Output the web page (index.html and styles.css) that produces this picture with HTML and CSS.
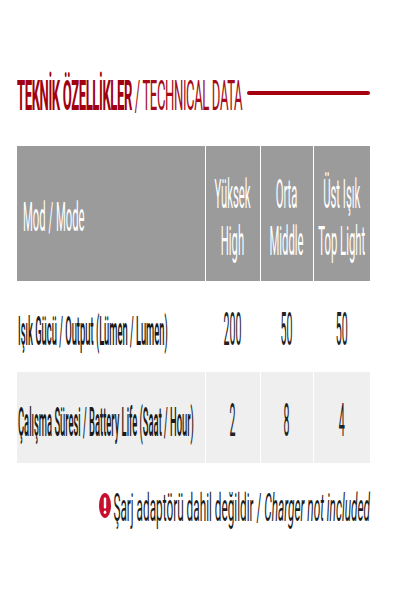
FILE: index.html
```html
<!DOCTYPE html>
<html lang="tr">
<head>
<meta charset="utf-8">
<title>Teknik Özellikler / Technical Data</title>
<link rel="stylesheet" href="styles.css">
</head>
<body>
<div class="page">
  <header class="title-row">
    <h1 class="title"><span class="stretch title-text"><b class="title-strong">TEKNİK ÖZELLİKLER</b> / TECHNICAL DATA</span></h1>
    <span class="rule"></span>
  </header>

  <table class="spec">
    <colgroup>
      <col class="c-label">
      <col class="c-high">
      <col class="c-mid">
      <col class="c-top">
    </colgroup>
    <thead>
      <tr>
        <th class="th-label"><div class="stretch-head">Mod / Mode</div></th>
        <th><div class="stretch-head">Yüksek<br>High</div></th>
        <th><div class="stretch-head">Orta<br>Middle</div></th>
        <th><div class="stretch-head">Üst Işık<br>Top Light</div></th>
      </tr>
    </thead>
    <tbody>
      <tr class="row-white">
        <td class="td-label"><div class="stretch-row">Işık Gücü / Output (Lümen / Lumen)</div></td>
        <td><div class="stretch-row num">200</div></td>
        <td><div class="stretch-row num">50</div></td>
        <td><div class="stretch-row num">50</div></td>
      </tr>
      <tr class="row-grey">
        <td class="td-label"><div class="stretch-row">Çalışma Süresi / Battery Life (Saat / Hour)</div></td>
        <td><div class="stretch-row num">2</div></td>
        <td><div class="stretch-row num">8</div></td>
        <td><div class="stretch-row num">4</div></td>
      </tr>
    </tbody>
  </table>

  <p class="note">
    <svg class="warn" width="12" height="25" viewBox="0 0 12 25" aria-hidden="true">
      <ellipse cx="6" cy="12.5" rx="6" ry="12.5" fill="#c8102e"/>
      <rect x="4.8" y="4.5" width="2.4" height="11" rx="1.1" fill="#ffffff"/>
      <ellipse cx="6" cy="19.2" rx="1.3" ry="1.8" fill="#ffffff"/>
    </svg>
    <span class="stretch-note">Şarj adaptörü dahil değildir / <i>Charger not included</i></span>
  </p>
</div>
</body>
</html>
```

FILE: styles.css
```css
html, body {
  margin: 0;
  padding: 0;
  background: #ffffff;
}

body {
  font-family: Roboto, "Liberation Sans", Arial, sans-serif;
  color: #1c1c1c;
}

.page {
  width: 401px;
  height: 601px;
  padding: 77px 31px 0 17px;
  box-sizing: border-box;
}

/* ---------- title ---------- */
.title-row {
  display: flex;
  align-items: center;
  gap: 5px;
  height: 40px;
}

.title {
  margin: 0;
  font-size: 13.1px;
  font-weight: 400;
  letter-spacing: -0.4px;
  line-height: 14px;
  color: #a50a18;
  white-space: nowrap;
}

.title-strong {
  font-weight: 700;
  color: #a0000f;
}

.stretch {
  display: inline-block;
  transform: scaleY(3.3);
}

.rule {
  flex: 1;
  height: 4px;
  margin-bottom: 8px;
  background: #a4000f;
  border-radius: 2px;
}

/* ---------- table ---------- */
.spec {
  margin-top: 29px;
  border-collapse: collapse;
  table-layout: fixed;
  width: 353px;
}

.c-label { width: 188px; }
.c-high  { width: 55px; }
.c-mid   { width: 53px; }
.c-top   { width: 57px; }

.spec th,
.spec td {
  padding: 10px 0 0;
  border-left: 1px solid #ffffff;
  text-align: center;
  vertical-align: middle;
}

.spec th:first-child,
.spec td:first-child {
  border-left: none;
}

.spec thead th {
  height: 125px;
  background: #9b9b9b;
  color: #ffffff;
  font-weight: 400;
  font-size: 11.3px;
}

.th-label,
.td-label {
  text-align: left !important;
  padding-left: 6px !important;
}

.td-label {
  padding-left: 1px !important;
}

.stretch-head {
  line-height: 13px;
  transform: scaleY(3.6);
}

.row-white td {
  height: 81px;
  background: #ffffff;
}

.row-grey td {
  height: 81px;
  background: #efefef;
}

.spec td {
  font-size: 9.4px;
  font-weight: 500;
  color: #1a1a1a;
  white-space: nowrap;
}

.stretch-row {
  line-height: 12px;
  transform: scaleY(4.4);
}

.num {
  font-size: 10.7px;
  font-weight: 400;
  color: #222222;
}

/* ---------- note ---------- */
.note {
  margin: 30px 0 0;
  display: flex;
  justify-content: flex-end;
  align-items: center;
  gap: 2px;
  font-size: 11.8px;
  color: #1c1c1c;
  white-space: nowrap;
}

.warn {
  flex: none;
  display: block;
  margin-bottom: 4px;
}

.stretch-note {
  display: inline-block;
  line-height: 12px;
  transform: scaleY(3.3);
}

.stretch-note i {
  font-style: italic;
}
```
